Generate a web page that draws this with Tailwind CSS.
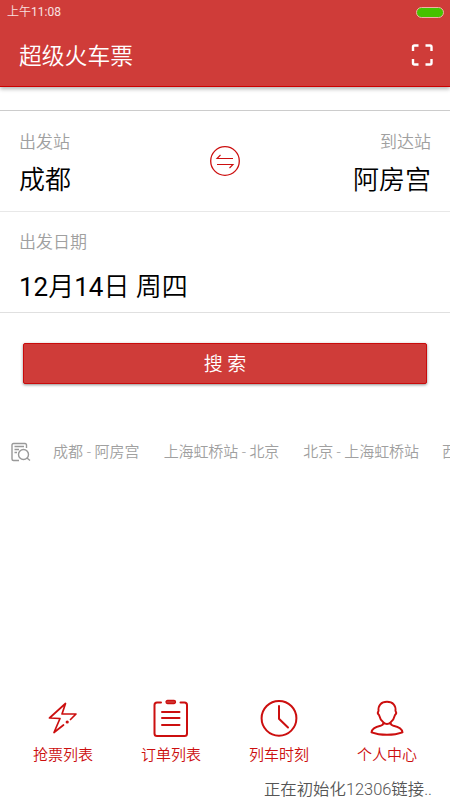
<!DOCTYPE html>
<html lang="zh-CN">
<head>
<meta charset="utf-8">
<title>超级火车票</title>
<script src="https://cdn.jsdelivr.net/npm/@tailwindcss/browser@4"></script>
</head>
<body class="bg-white">
<div class="flex h-[800px] w-[450px] flex-col overflow-hidden bg-white font-[350] font-[Roboto,'Noto_Sans_CJK_SC',sans-serif]">
  <header class="h-[87px] shrink-0 border-b border-[#cc0000] bg-[#cf3c39] text-white shadow-[0_2px_4px_rgba(0,0,0,0.3)]">
    <div class="flex h-6 items-center justify-between pr-[6px] pl-[7px]">
      <span class="text-[12px] leading-6 text-white/85">上午<span class="font-normal">11:08</span></span>
      <span class="h-[11px] w-7 rounded-full border border-[#f0b0a8] bg-[#46c300]"></span>
    </div>
    <div class="flex h-[62px] items-center justify-between pr-[16px] pl-[19px]">
      <h1 class="pt-1 text-[22.8px] leading-8">超级火车票</h1>
      <svg class="h-[24px] w-[24px]" viewBox="0 0 24 24" fill="none" stroke="#fff" stroke-width="2.4"><path d="M3 8V4Q3 2.500 4.500 2.500H8.500M15.500 2.500H20Q21.500 2.500 21.500 4V8M21.500 16V20Q21.500 21.500 20 21.500H15.500M8.500 21.500H4.500Q3 21.500 3 20V16"/></svg>
    </div>
  </header>
  <main class="mt-[23px] border-t border-[#cccccc]">
    <section class="flex h-[101px] justify-between border-b border-[#e8e8e8] px-[19px]">
      <div class="w-[150px] pt-[19px]">
        <p class="text-[17px] leading-6 text-[#a0a0a0]">出发站</p>
        <p class="mt-[8px] text-[26px] leading-9 text-black">成都</p>
      </div>
      <svg class="mt-[34px] h-[32px] w-[32px]" viewBox="0 0 32 32" fill="none" stroke="#cc0f0f"><circle cx="16" cy="16" r="14.300" stroke-width="1.300"/><path d="M24 13.500H8L11.500 10M8 19.500H24L20.500 23" stroke-width="1.100"/></svg>
      <div class="w-[150px] pt-[19px] text-right">
        <p class="text-[17px] leading-6 text-[#a0a0a0]">到达站</p>
        <p class="mt-[8px] text-[26px] leading-9 text-black">阿房宫</p>
      </div>
    </section>
    <section class="h-[101px] border-b border-[#e0e0e0] px-[19px] pt-[18px]">
      <p class="text-[17px] leading-6 text-[#a0a0a0]">出发日期</p>
      <p class="mt-[15px] text-[26px] leading-9 text-black"><span class="font-normal">12</span>月<span class="font-normal">14</span>日 周四</p>
    </section>
  </main>
  <button class="mx-[23px] mt-[30px] h-[41px] shrink-0 rounded-[2px] border border-[#c90b0b] bg-[#cf3c39] pt-[3px] text-[19px] text-white shadow-[0_1px_3px_rgba(0,0,0,0.45)]">搜 索</button>
  <div class="mt-[56px] flex h-6 shrink-0 items-center overflow-hidden pl-[11px] text-[15px] leading-6 whitespace-nowrap text-[#a0a0a0]">
    <svg class="mr-[22px] h-5 w-5 shrink-0" viewBox="0 0 20 20" fill="none" stroke="#999" stroke-width="1.400"><path d="M15.500 6V3Q15.500 1.500 14 1.500H2.500Q1 1.500 1 3V17Q1 18.500 2.500 18.500H8M3.500 4.500H13M3.500 7.500H8M3.500 10.500H6"/><circle cx="12.500" cy="12.500" r="5"/><path d="M16 16L19 18.500"/></svg>
    <span class="mr-6">成都 - 阿房宫</span>
    <span class="mr-6 tracking-[-0.1px]">上海虹桥站 - 北京</span>
    <span class="mr-[23px] tracking-[-0.1px]">北京 - 上海虹桥站</span>
    <span>西安 - 成都</span>
  </div>
  <nav class="mt-[234px] grid shrink-0 grid-cols-4 px-[9px] text-[15px] leading-6 text-[#cc0f0f]">
    <a class="flex flex-col items-center">
      <svg class="h-10 w-10" viewBox="0 0 40 40" fill="none" stroke="#cc0f0f" stroke-width="1.700" stroke-linejoin="round" stroke-linecap="round"><path d="M20.500 27L11 34.500L17 20.500L6.500 20L22.500 5.500L19 16L33 16L27.500 21.500"/><circle cx="24.200" cy="24" r="1" fill="#cc0f0f" stroke-width="1.200"/></svg>
      <span class="mt-[5px]">抢票列表</span>
    </a>
    <a class="flex flex-col items-center">
      <svg class="h-10 w-10" viewBox="0 0 40 40" fill="none" stroke="#cc0f0f" stroke-width="2" stroke-linecap="round"><path d="M10 4.500H6Q3.500 4.500 3.500 7V35.500Q3.500 38 6 38H33.500Q36 38 36 35.500V7Q36 4.500 33.500 4.500H29.500M11 14H28.500M11 20H28.500M11 27H28.500"/><rect x="15" y="2.500" width="9.500" height="3" rx="1.500" fill="#cf3c39" stroke-width="1.300"/></svg>
      <span class="mt-[5px]">订单列表</span>
    </a>
    <a class="flex flex-col items-center">
      <svg class="h-10 w-10" viewBox="0 0 40 40" fill="none" stroke="#cc0f0f" stroke-width="2" stroke-linecap="round"><circle cx="20" cy="20.300" r="17.400"/><path d="M20 8V20.800L29 29.500"/></svg>
      <span class="mt-[5px]">列车时刻</span>
    </a>
    <a class="flex flex-col items-center">
      <svg class="h-10 w-10" viewBox="0 0 40 40" fill="none" stroke="#cc0f0f" stroke-width="1.900" stroke-linejoin="round"><path d="M20 3.800C14 3.800 11 7.500 11.500 13C10.300 14.500 10.800 16 12 17Q13 21.500 16.500 24.500Q20 27.500 23.500 24.500Q27 21.500 28 17C29.200 16 29.700 14.500 28.500 13C29 7.500 26 3.800 20 3.800ZM16.500 24.500Q16.500 27 13.500 27.800C8 29 5 31 4.500 34.300Q11 36.800 20 36.800T35.500 34.300C35 31 32 29 26.500 27.800Q23.500 27 23.500 24.500"/></svg>
      <span class="mt-[5px]">个人中心</span>
    </a>
  </nav>
  <p class="mt-[11px] pr-[18px] text-right text-[16.4px] leading-6 text-[#555]">正在初始化12306链接..</p>
</div>
</body>
</html>
